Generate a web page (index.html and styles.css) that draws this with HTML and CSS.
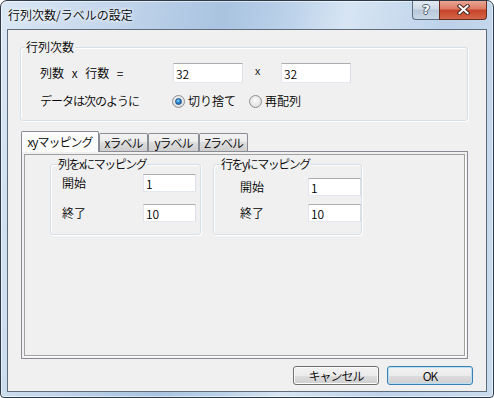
FILE: index.html
```html
<!DOCTYPE html>
<html lang="ja">
<head>
    <meta charset="UTF-8">
    <title>行列次数/ラベルの設定</title>
    <link rel="stylesheet" href="styles.css">
</head>
<body>

    <div class="window">

        <!-- Title bar -->
        <div class="titlebar">
            <span class="title">行列次数/ラベルの設定</span>
            <div class="caption-btns">
                <span class="cap-btn help">?</span>
                <span class="cap-btn close">
                    <svg width="13" height="11" viewBox="0 0 13 11">
                        <path d="M2.5 2 L10.5 9 M10.5 2 L2.5 9" stroke="#4b2b24" stroke-width="4" stroke-linecap="square"/>
                        <path d="M2.5 2 L10.5 9 M10.5 2 L2.5 9" stroke="#ffffff" stroke-width="2" stroke-linecap="square"/>
                    </svg>
                </span>
            </div>
        </div>

        <div class="client">

            <!-- Matrix size -->
            <div class="group group-size">
                <div class="group-title">行列次数</div>
                <div class="size-row">
                    <span class="lbl lbl-size">列数 x 行数 =</span>
                    <input class="edit edit-size" type="text" value="32">
                    <span class="times">x</span>
                    <input class="edit edit-size" type="text" value="32">
                </div>
                <div class="mode-row">
                    <span class="lbl lbl-mode">データは次のように</span>
                    <span class="radio on"><span class="dot"></span></span>
                    <span class="radio-text">切り捨て</span>
                    <span class="radio second"></span>
                    <span class="radio-text">再配列</span>
                </div>
            </div>

            <!-- Tabs -->
            <div class="tabs">
                <span class="tab active tab-xy">xyマッピング</span>
                <span class="tab tab-x">xラベル</span>
                <span class="tab tab-y">yラベル</span>
                <span class="tab tab-z">Zラベル</span>
            </div>

            <div class="tab-panel">
                <div class="tab-page">
                    <div class="group group-map map-x">
                        <div class="group-title">列をxにマッピング</div>
                        <div class="map-row first">
                            <span class="lbl">開始</span>
                            <input class="edit edit-map" type="text" value="1">
                        </div>
                        <div class="map-row second">
                            <span class="lbl">終了</span>
                            <input class="edit edit-map" type="text" value="10">
                        </div>
                    </div>
                    <div class="group group-map map-y">
                        <div class="group-title">行をyにマッピング</div>
                        <div class="map-row first">
                            <span class="lbl">開始</span>
                            <input class="edit edit-map" type="text" value="1">
                        </div>
                        <div class="map-row second">
                            <span class="lbl">終了</span>
                            <input class="edit edit-map" type="text" value="10">
                        </div>
                    </div>
                </div>
            </div>

            <!-- Dialog buttons -->
            <div class="buttons">
                <button class="btn">キャンセル</button>
                <button class="btn default">OK</button>
            </div>

        </div>
    </div>

</body>
</html>
```

FILE: styles.css
```css
body {
    margin: 0;
    background: #ffffff;
    font-family: "Noto Sans CJK JP", "Liberation Sans", sans-serif;
    font-size: 12px;
    font-weight: 350;
    line-height: 14px;
    color: #000;
}

* {
    box-sizing: border-box;
}

/* Window frame */
.window {
    width: 494px;
    height: 398px;
    border: 1px solid #2e3a47;
    border-radius: 7px 7px 4px 4px;
    padding: 0 6px 5px;
    display: flex;
    flex-direction: column;
    overflow: hidden;
    background: linear-gradient(100deg, #dae7f4 0%, #c6d8ed 18%, #a9c3e0 40%, #bcd2ea 52%, #d7e5f3 62%, #bdd2ea 80%, #cadcef 100%);
    box-shadow: inset 0 0 0 1px rgba(255, 255, 255, 0.55);
}

.titlebar {
    height: 28px;
    display: flex;
    justify-content: space-between;
    align-items: flex-start;
}

.title {
    margin: 7px 0 0 1px;
    text-shadow: 0 0 6px #ffffff, 0 0 3px #ffffff;
}

.caption-btns {
    display: flex;
    margin-top: -1px;
}

.cap-btn {
    height: 20px;
    display: flex;
    align-items: center;
    justify-content: center;
    border: 1px solid #5d6d80;
    border-top: none;
}

.help {
    width: 27px;
    border-radius: 0 0 0 4px;
    border-right: none;
    background: linear-gradient(#e4ecf4 0%, #cfdbe7 45%, #b8c8d9 55%, #c9d7e5 100%);
    color: #ffffff;
    font-family: "DejaVu Sans", sans-serif;
    font-size: 13px;
    font-weight: bold;
    text-shadow: 1px 0 #4d5d70, -1px 0 #4d5d70, 0 1px #4d5d70, 0 -1px #4d5d70;
}

.close {
    width: 48px;
    border-color: #6a2c20;
    border-radius: 0 0 4px 0;
    background: linear-gradient(#ebab9b 0%, #dd7c66 45%, #c8442a 55%, #d4664a 100%);
}

.client {
    flex: 1;
    background: #f0f0f0;
    border: 1px solid #5f6c7b;
    display: flex;
    flex-direction: column;
}

/* Group boxes */
.group {
    border: 1px solid #d5dfe5;
    border-radius: 3px;
    box-shadow: inset 1px 1px 0 #ffffff, 1px 1px 0 #ffffff;
}

.group-title {
    width: max-content;
    margin: -8px 0 0 4px;
    padding: 0 1px;
    background: #f0f0f0;
}

.group-size {
    width: 448px;
    height: 74px;
    margin: 17px 0 0 12px;
}

.size-row {
    display: flex;
    align-items: center;
    height: 20px;
    margin-top: 9px;
    padding-left: 19px;
}

.lbl-size {
    width: 133px;
    word-spacing: 5px;
}

.times {
    width: 38px;
    padding-left: 12px;
    align-self: flex-start;
    font-size: 11px;
}

.edit {
    height: 20px;
    border: 1px solid;
    border-color: #abadb3 #dbdfe6 #e3e9ef #e2e3ea;
    background: #ffffff;
    padding: 0 2px;
    font: inherit;
    color: #000;
    outline: none;
}

.edit-size {
    width: 70px;
}

.mode-row {
    display: flex;
    align-items: center;
    height: 18px;
    margin-top: 9px;
    padding-left: 19px;
}

.lbl-mode {
    width: 132px;
    letter-spacing: -1px;
}

.radio {
    width: 13px;
    height: 13px;
    border-radius: 50%;
    border: 1px solid #8e8f8f;
    background: radial-gradient(circle at 50% 40%, #fbfbfb 0%, #e6e6e6 60%, #cfcfcf 100%);
    display: flex;
    align-items: center;
    justify-content: center;
}

.radio.second {
    margin-left: 13px;
}

.dot {
    width: 7px;
    height: 7px;
    border-radius: 50%;
    background: radial-gradient(circle at 40% 35%, #8fd1f7 0%, #2b8ad6 45%, #12518f 100%);
    border: 1px solid #1c4f80;
}

.radio-text {
    margin-left: 3px;
}

/* Tabs */
.tabs {
    display: flex;
    align-items: flex-end;
    height: 20px;
    margin: 10px 0 0 13px;
}

.tab {
    height: 18px;
    border: 1px solid #898c95;
    border-bottom: none;
    border-radius: 2px 2px 0 0;
    background: linear-gradient(#f3f3f3 0%, #ebebeb 50%, #dddddd 50%, #cfcfcf 100%);
    display: flex;
    align-items: center;
    justify-content: center;
    letter-spacing: -1px;
}

.tab.active {
    height: 21px;
    margin-bottom: -1px;
    position: relative;
    z-index: 1;
    background: #fcfcfc;
    padding-bottom: 1px;
}

.tab-xy { width: 78px; }
.tab-x { width: 49px; }
.tab-y { width: 51px; }
.tab-z { width: 49px; }

.tab-panel {
    width: 447px;
    height: 208px;
    margin-left: 13px;
    border: 1px solid #898c95;
    padding: 2px;
}

.tab-page {
    height: 100%;
    border: 1px solid #a0a0a0;
    box-shadow: 1px 1px 0 #ffffff;
    display: flex;
    align-items: flex-start;
    gap: 12px;
    padding: 9px 0 0 25px;
}

.group-map {
    height: 71px;
}

.group-map .group-title {
    letter-spacing: -1.5px;
}

.map-x {
    width: 151px;
    padding-left: 11px;
}

.map-y {
    width: 149px;
    padding-left: 26px;
}

.map-x .group-title {
    margin-left: -5px;
}

.map-y .group-title {
    margin-left: -20px;
}

.map-row {
    display: flex;
    align-items: center;
    height: 18px;
}

.map-x .lbl { width: 81px; }
.map-y .lbl { width: 68px; }

.map-x .first { margin-top: 3px; }
.map-x .second { margin-top: 12px; }
.map-y .first { margin-top: 7px; }
.map-y .second { margin-top: 8px; }

.edit-map {
    width: 53px;
    height: 18px;
}

/* Dialog buttons */
.buttons {
    display: flex;
    justify-content: flex-end;
    gap: 8px;
    margin: 7px 13px 0 0;
}

.btn {
    width: 86px;
    height: 19px;
    padding: 0;
    border: 1px solid #707070;
    border-radius: 3px;
    background: linear-gradient(#f2f2f2 0%, #ebebeb 50%, #dddddd 50%, #cfcfcf 100%);
    box-shadow: inset 0 0 0 1px #fcfcfc;
    font: inherit;
    color: #000;
    letter-spacing: -1px;
}

.btn.default {
    border-color: #3c7fb1;
    box-shadow: inset 0 0 0 1px #b7e0f7;
}
```
